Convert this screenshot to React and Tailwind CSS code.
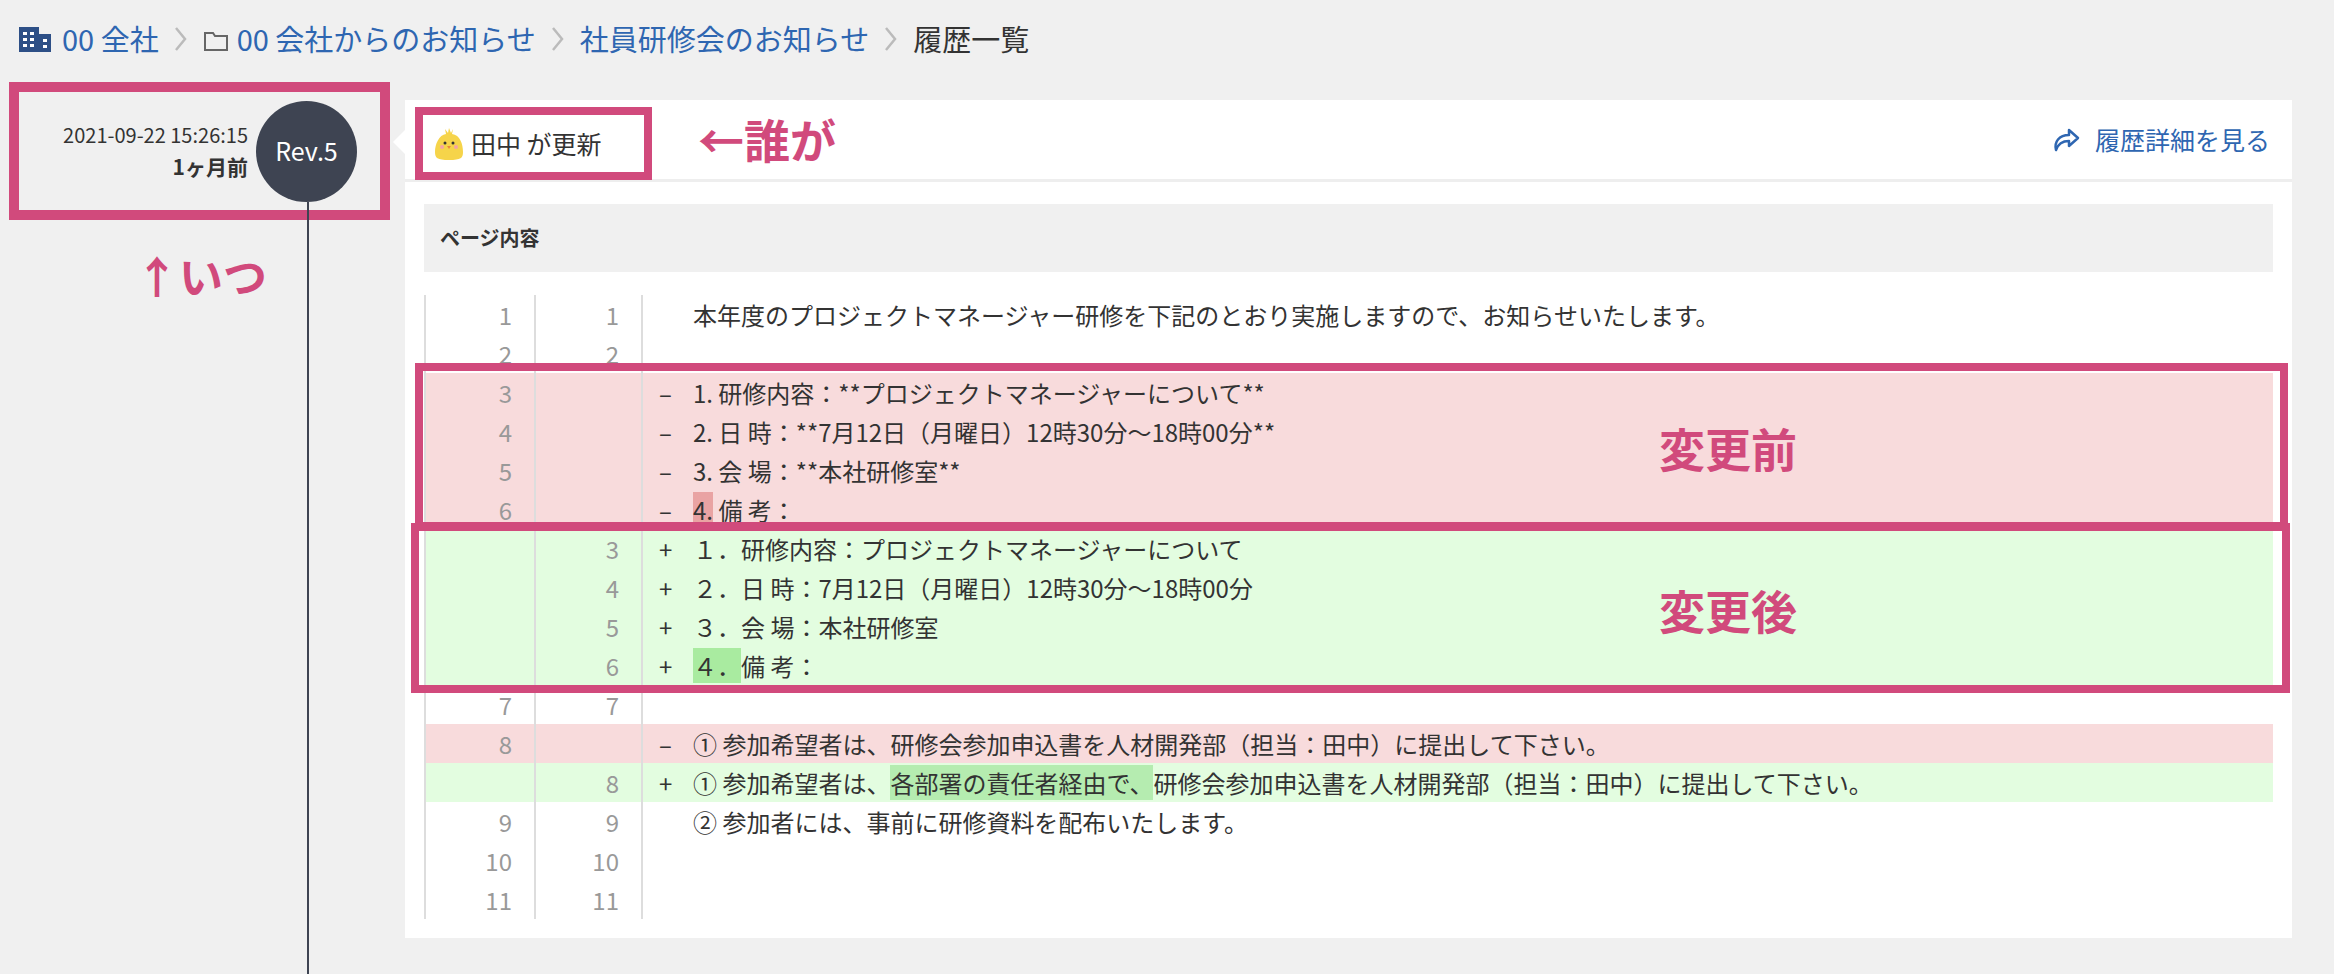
import React from "react";

const rows = [
  { a: "1", b: "1", t: "n", c: "本年度のプロジェクトマネージャー研修を下記のとおり実施しますので、お知らせいたします。" },
  { a: "2", b: "2", t: "n", c: "" },
  { a: "3", b: "", t: "d", c: "1. 研修内容：**プロジェクトマネージャーについて**" },
  { a: "4", b: "", t: "d", c: "2. 日 時：**7月12日（月曜日）12時30分〜18時00分**" },
  { a: "5", b: "", t: "d", c: "3. 会 場：**本社研修室**" },
  { a: "6", b: "", t: "d", hl: "4.", c: " 備 考：" },
  { a: "", b: "3", t: "a", c: "１．研修内容：プロジェクトマネージャーについて" },
  { a: "", b: "4", t: "a", c: "２．日 時：7月12日（月曜日）12時30分〜18時00分" },
  { a: "", b: "5", t: "a", c: "３．会 場：本社研修室" },
  { a: "", b: "6", t: "a", hl: "４．", c: "備 考：" },
  { a: "7", b: "7", t: "n", c: "" },
  { a: "8", b: "", t: "d", c: "① 参加希望者は、研修会参加申込書を人材開発部（担当：田中）に提出して下さい。" },
  { a: "", b: "8", t: "a", pre: "① 参加希望者は、", mid: "各部署の責任者経由で、", c: "研修会参加申込書を人材開発部（担当：田中）に提出して下さい。" },
  { a: "9", b: "9", t: "n", c: "② 参加者には、事前に研修資料を配布いたします。" },
  { a: "10", b: "10", t: "n", c: "" },
  { a: "11", b: "11", t: "n", c: "" },
];

const Chev = () => (
  <svg width="16" height="30" viewBox="0 0 16 30" className="mx-[14px]">
    <path d="M3 4 L12 15 L3 26" stroke="#bbb" strokeWidth="2.5" fill="none" />
  </svg>
);

export default function App() {
  const font = { fontFamily: '"Noto Sans CJK JP", "Noto Sans", sans-serif' };
  return (
    <div className="w-[2334px] h-[974px] bg-[#f0f0f0] overflow-hidden text-[#333]" style={font}>
      <div className="h-[82px] flex items-center pl-[18px] pb-[4px] text-[29px] text-[#2e66b1]">
        <svg width="34" height="30" viewBox="0 0 34 30" className="mr-[10px]">
          <rect x="1" y="3" width="20" height="25" fill="#2d4f86" />
          <rect x="21" y="10" width="12" height="18" fill="#2d4f86" />
          <rect x="5" y="8" width="4" height="3" fill="#fff" /><rect x="12" y="8" width="4" height="3" fill="#fff" />
          <rect x="5" y="14" width="4" height="3" fill="#fff" /><rect x="12" y="14" width="4" height="3" fill="#fff" />
          <rect x="5" y="20" width="4" height="3" fill="#fff" /><rect x="12" y="20" width="4" height="3" fill="#fff" />
          <rect x="25" y="15" width="4" height="3" fill="#fff" /><rect x="25" y="21" width="4" height="3" fill="#fff" />
        </svg>
        <span>00 全社</span>
        <Chev />
        <svg width="26" height="22" viewBox="0 0 26 22" className="mr-[8px] mt-[4px]">
          <path d="M2 3 H10 L12 6 H24 V20 H2 Z" stroke="#666" strokeWidth="2" fill="none" />
        </svg>
        <span>00 会社からのお知らせ</span>
        <Chev />
        <span>社員研修会のお知らせ</span>
        <Chev />
        <span className="text-[#333]">履歴一覧</span>
      </div>
      <div className="flex">
        <div className="w-[405px] h-[892px] relative">
          <div className="ml-[9px] w-[381px] h-[138px] border-[10px] border-[#d14a7c] flex items-center justify-end pr-[23px] gap-[8px]">
            <div className="text-right">
              <div className="text-[20px] leading-[30px]">2021-09-22 15:26:15</div>
              <div className="text-[21px] font-bold leading-[32px]">1ヶ月前</div>
            </div>
            <div className="w-[101px] h-[101px] rounded-full bg-[#3e4452] text-white text-[25px] flex items-center justify-center">Rev.5</div>
          </div>
          <div className="absolute left-[307px] top-[120px] bottom-0 w-[2px] bg-[#3e4452]"></div>
          <div className="absolute left-[135px] top-[160px] text-[44px] font-bold text-[#d14a7c]">↑いつ</div>
        </div>
        <div className="w-[1887px] h-[838px] mt-[18px] bg-white relative">
          <div className="absolute left-[-12px] top-[30px] w-0 h-0 border-y-[12px] border-y-transparent border-r-[12px] border-r-white"></div>
          <div className="h-[82px] border-b-[3px] border-[#eee] flex items-center relative">
            <div className="absolute left-[10px] top-[7px] w-[237px] h-[73px] border-[8px] border-[#d14a7c] flex items-center pl-[10px] gap-[6px]">
              <svg width="32" height="36" viewBox="0 0 32 36">
                <path d="M16 2 L18 7 L20 3 L19 8 C27 9 30 18 30 26 C30 32 28 34 16 34 C4 34 2 32 2 26 C2 18 6 9 13 8 L12 3 L15 7 Z" fill="#f6d44a" />
                <circle cx="12" cy="17" r="1.5" fill="#333" /><circle cx="20" cy="17" r="1.5" fill="#333" />
                <path d="M14 20 L18 20 L16 23 Z" fill="#e88a3a" />
                <circle cx="9" cy="21" r="2" fill="#f4a3a3" /><circle cx="23" cy="21" r="2" fill="#f4a3a3" />
              </svg>
              <span className="text-[25px]">田中 が更新</span>
            </div>
            <div className="absolute left-[293px] top-[4px] text-[46px] font-bold text-[#d14a7c]">←誰が</div>
            <div className="ml-auto mr-[22px] flex items-center gap-[14px] text-[25px] text-[#2e66b1]">
              <svg width="30" height="26" viewBox="0 0 30 26">
                <path d="M18 3 L27 11 L18 19 V14 C11 14 7 17 5 23 C3 15 8 8 18 8 Z" stroke="#2e66b1" strokeWidth="2.5" fill="none" strokeLinejoin="round" />
              </svg>
              <span>履歴詳細を見る</span>
            </div>
          </div>
          <div className="px-[19px] pt-[22px]">
            <div className="h-[68px] bg-[#f0f0f0] flex items-center pl-[16px] text-[20px] font-bold">ページ内容</div>
            <div className="mt-[23px] relative">
              {rows.map((r, i) => {
                const bg = r.t === "d" ? "bg-[#f8dbdc]" : r.t === "a" ? "bg-[#e3fde0]" : "bg-white";
                const hlbg = r.t === "d" ? "bg-[#e9a3a3]" : "bg-[#a9eba0]";
                return (
                  <div key={i} className={`flex h-[39px] items-center text-[24px] ${bg}`}>
                    <div className="w-[112px] h-full border-l-2 border-r-2 border-[#ddd] text-right pr-[22px] text-[#999] leading-[39px]">{r.a}</div>
                    <div className="w-[107px] h-full border-r-2 border-[#ddd] text-right pr-[22px] text-[#999] leading-[39px]">{r.b}</div>
                    <div className="w-[50px] pl-[16px] text-[24px]">{r.t === "d" ? "–" : r.t === "a" ? "+" : ""}</div>
                    <div className="whitespace-pre">
                      {r.pre}
                      {r.mid && <span className="bg-[#b5ecb0]">{r.mid}</span>}
                      {r.hl && <span className={hlbg}>{r.hl}</span>}
                      {r.c}
                    </div>
                  </div>
                );
              })}
              <div className="absolute left-[-9px] right-[-15px] top-[68px] h-[167px] border-[8px] border-[#d14a7c]">
                <div className="absolute left-[1236px] top-[42px] text-[46px] font-bold text-[#d14a7c]">変更前</div>
              </div>
              <div className="absolute left-[-13px] right-[-17px] top-[228px] h-[170px] border-[8px] border-[#d14a7c]">
                <div className="absolute left-[1240px] top-[44px] text-[46px] font-bold text-[#d14a7c]">変更後</div>
              </div>
            </div>
          </div>
        </div>
      </div>
    </div>
  );
}
